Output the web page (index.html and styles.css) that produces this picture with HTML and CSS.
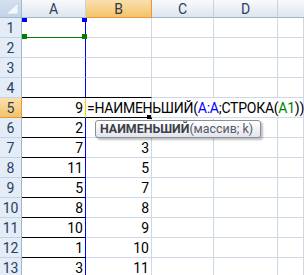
FILE: index.html
```html
<!doctype html>
<html lang="ru">
 <head>
  <meta charset="UTF-8">
  <title>НАИМЕНЬШИЙ</title>
  <meta name="viewport" content="width=device-width, initial-scale=1.0">
  <link rel="stylesheet" href="styles.css">
 </head>
 <body>
  <div class="sheet">
   <!-- header -->
   <div class="corner"><svg width="14" height="12" viewBox="0 0 14 12"><polygon points="13,0 13,11 1,11" fill="#f4f6fa" stroke="#b7c6da" stroke-width="0.5"/></svg></div>
   <div class="ch">A</div>
   <div class="ch sel">B</div>
   <div class="ch">C</div>
   <div class="ch">D</div>
   <div class="ch last"></div>
   <!-- 1 -->
   <div class="rh">1</div><div class="c a ref"></div><div class="c"></div><div class="c"></div><div class="c"></div><div class="c"></div>
   <!-- 2 -->
   <div class="rh">2</div><div class="c a"></div><div class="c"></div><div class="c"></div><div class="c"></div><div class="c"></div>
   <!-- 3 -->
   <div class="rh">3</div><div class="c a"></div><div class="c"></div><div class="c"></div><div class="c"></div><div class="c"></div>
   <!-- 4 -->
   <div class="rh">4</div><div class="c a blk"></div><div class="c blk"></div><div class="c"></div><div class="c"></div><div class="c"></div>
   <!-- 5 -->
   <div class="rh sel">5</div>
   <div class="c a blk edit-left">9</div>
   <div class="c blk formula">=НАИМЕНЬШИЙ(<span class="r1">A:A</span>;СТРОКА(<span class="r2">A1</span>))</div>
   <div class="c open"></div><div class="c open"></div><div class="c"></div>
   <!-- 6 -->
   <div class="rh">6</div><div class="c a blk">2</div><div class="c"></div><div class="c"></div><div class="c"></div><div class="c"></div>
   <!-- 7 -->
   <div class="rh">7</div><div class="c a blk">7</div><div class="c">3</div><div class="c"></div><div class="c"></div><div class="c"></div>
   <!-- 8 -->
   <div class="rh">8</div><div class="c a blk">11</div><div class="c">5</div><div class="c"></div><div class="c"></div><div class="c"></div>
   <!-- 9 -->
   <div class="rh">9</div><div class="c a blk">5</div><div class="c">7</div><div class="c"></div><div class="c"></div><div class="c"></div>
   <!-- 10 -->
   <div class="rh">10</div><div class="c a blk">8</div><div class="c">8</div><div class="c"></div><div class="c"></div><div class="c"></div>
   <!-- 11 -->
   <div class="rh">11</div><div class="c a blk">10</div><div class="c">9</div><div class="c"></div><div class="c"></div><div class="c"></div>
   <!-- 12 -->
   <div class="rh">12</div><div class="c a blk">1</div><div class="c">10</div><div class="c"></div><div class="c"></div><div class="c"></div>
   <!-- 13 -->
   <div class="rh">13</div><div class="c a blk">3</div><div class="c">11</div><div class="c"></div><div class="c"></div><div class="c"></div>

   <!-- range markers and tooltip -->
   <span class="mark blue m-tl"></span>
   <span class="mark blue m-tr"></span>
   <span class="mark green m-bl"></span>
   <span class="mark green m-br"></span>
   <span class="handle"></span>
   <div class="tip"><b>НАИМЕНЬШИЙ</b><span class="args">(массив; k)</span></div>
  </div>
 </body>
</html>
```

FILE: styles.css
```css
:root {
  --grid: #d0d7e5;
  --head-border: #9eb6ce;
  --head-text: #27415f;
  --sel-border: #f29436;
}

body {
  margin: 0;
  background: #fff;
  font-family: Roboto, 'Liberation Sans', sans-serif;
  overflow: hidden;
}

.sheet {
  position: relative;
  display: grid;
  grid-template-columns: 22px 64px 66px 62px 64px 1fr;
  grid-template-rows: 18px repeat(13, 20px);
  width: 304px;
  height: 275px;
  overflow: hidden;
}

.sheet > div {
  box-sizing: border-box;
}

/* headers */
.corner {
  background: linear-gradient(#d4e0ef, #c3d3e8);
  border-right: 1px solid var(--head-border);
  border-bottom: 1px solid var(--head-border);
  display: flex;
  align-items: flex-end;
  justify-content: flex-end;
  padding: 0 2px 2px 0;
}

.corner svg {
  display: block;
}

.ch {
  background: linear-gradient(#f8f9fb, #dfe5ee);
  border-right: 1px solid #c5d3e3;
  border-bottom: 1px solid var(--head-border);
  color: var(--head-text);
  font-size: 14px;
  line-height: 18px;
  text-align: center;
}

.ch.sel {
  background: linear-gradient(#fae0ae, #f2c46a);
  border-right: 1px solid var(--sel-border);
  border-bottom: 1px solid var(--sel-border);
  color: #2c3a4c;
}

.ch.last {
  border-right: none;
}

.rh {
  background: #e4ecf7;
  border-right: 1px solid var(--head-border);
  border-bottom: 1px solid #c5d3e3;
  color: var(--head-text);
  font-size: 14px;
  line-height: 20px;
  text-align: center;
}

.rh.sel {
  background: linear-gradient(#fae0ae, #f2c46a);
  border-right: 1px solid var(--sel-border);
  border-bottom: 1px solid var(--sel-border);
}

/* cells */
.c {
  border-right: 1px solid var(--grid);
  border-bottom: 1px solid var(--grid);
  font-size: 14px;
  line-height: 19px;
  padding: 1px 2px 0;
  text-align: right;
  color: #000;
  white-space: nowrap;
}

.c.a {
  border-right-color: #0000ff;
}

.c.ref {
  border-bottom-color: #008000;
}

.c.blk {
  border-bottom-color: #000;
}

.c.edit-left {
  border-right-color: #e6dc00;
}

.c.open {
  border-right-color: transparent;
}

.formula {
  position: relative;
  z-index: 1;
  text-align: left;
  overflow: visible;
  padding-left: 1px;
  letter-spacing: -0.25px;
}

.r1 {
  color: #0000ff;
}

.r2 {
  color: #008000;
}

/* range corner marks */
.mark {
  position: absolute;
  width: 5px;
  height: 4px;
}

.mark.blue {
  background: #0000ff;
}

.mark.green {
  background: #008000;
  height: 5px;
}

.m-tl { left: 22px; top: 18px; }
.m-tr { left: 82px; top: 18px; }
.m-bl { left: 22px; top: 34px; }
.m-br { left: 82px; top: 34px; }

.handle {
  position: absolute;
  left: 146px;
  top: 115px;
  width: 5px;
  height: 4px;
  background: #000;
  border-left: 1px solid #fff;
}

.tip {
  position: absolute;
  left: 95px;
  top: 120px;
  height: 18px;
  box-sizing: border-box;
  border: 1px solid #8a8f99;
  border-radius: 3px;
  background: linear-gradient(#ffffff, #e3e5ee);
  box-shadow: 2px 2px 2px rgba(0, 0, 0, 0.25);
  z-index: 2;
  display: flex;
  font-size: 12.4px;
  line-height: 16px;
  color: #555a63;
  padding: 0 6px 0 4px;
  white-space: nowrap;
}

.tip b {
  color: #3c4049;
}

.args {
  padding-right: 1px;
}
```
